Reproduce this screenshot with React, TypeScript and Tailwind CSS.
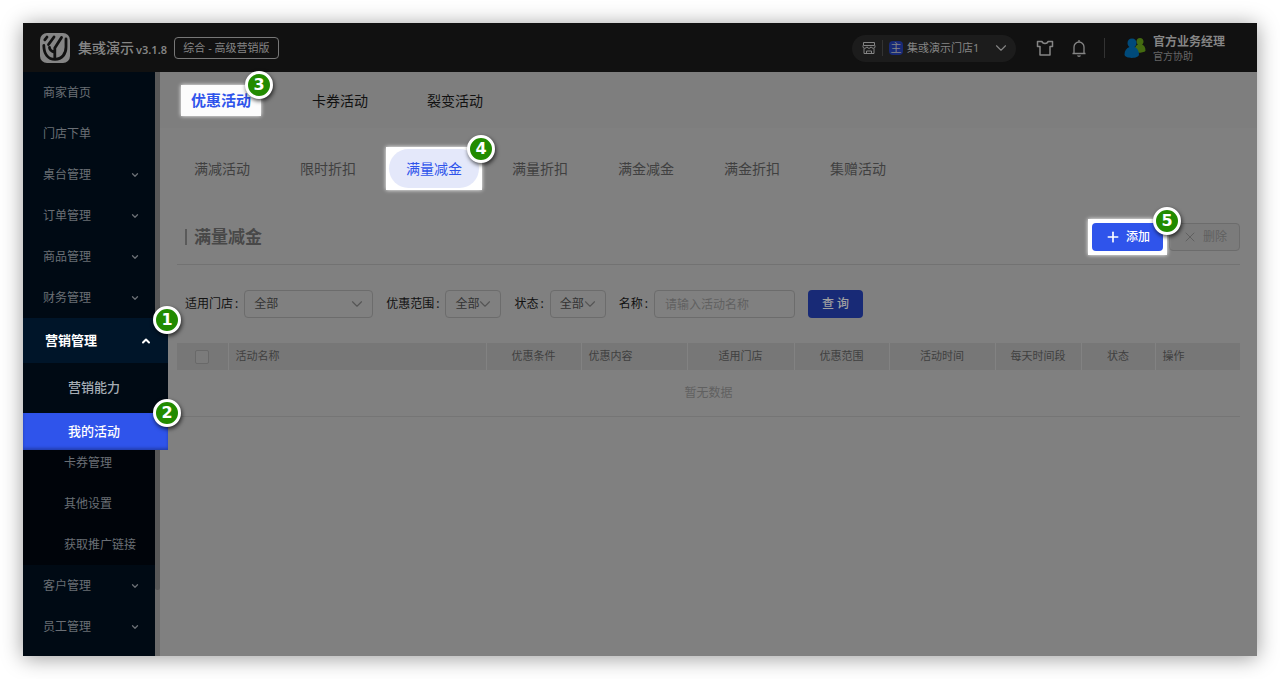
import type { ReactNode } from "react";
import clsx from "clsx";
import { ChevronDown, ChevronUp, Plus, X } from "lucide-react";

const menuTop = [
  { label: "商家首页", more: false },
  { label: "门店下单", more: false },
  { label: "桌台管理", more: true },
  { label: "订单管理", more: true },
  { label: "商品管理", more: true },
  { label: "财务管理", more: true },
];
const submenu = ["卡券管理", "其他设置", "获取推广链接"];
const menuBottom = [
  { label: "客户管理", more: true },
  { label: "员工管理", more: true },
];

const tabs = [
  "满减活动",
  "限时折扣",
  "满量减金",
  "满量折扣",
  "满金减金",
  "满金折扣",
  "集赠活动",
];

const columns = [
  { label: "活动名称", className: "w-[258px] pl-[7px] text-left" },
  { label: "优惠条件", className: "w-[95px] text-center" },
  { label: "优惠内容", className: "w-[106px] pl-[7px] text-left" },
  { label: "适用门店", className: "w-[107px] text-center" },
  { label: "优惠范围", className: "w-[95px] text-center" },
  { label: "活动时间", className: "w-[106px] text-center" },
  { label: "每天时间段", className: "w-[86px] text-center" },
  { label: "状态", className: "w-[74px] text-center" },
  { label: "操作", className: "w-[85px] pl-[7px] text-left" },
];

function Badge({ children, className }: { children: ReactNode; className: string }) {
  return (
    <span
      className={clsx(
        "absolute z-20 flex h-7 w-7 items-center justify-center rounded-full border-3 border-white bg-[#228b00] font-['DejaVu_Sans',sans-serif] text-base font-bold text-white shadow-[1px_2px_4px_rgba(0,0,0,0.7)]",
        className,
      )}
    >
      {children}
    </span>
  );
}

function Logo() {
  return (
    <svg className="h-[30px] w-[30px]" viewBox="0 0 30 30" fill="none" aria-hidden="true">
      <rect width="30" height="30" rx="7" fill="#858585" />
      <g stroke="#111" strokeWidth="2.8" strokeLinecap="round" strokeLinejoin="round">
        <path d="M4.800 6.800 7 4" />
        <path d="M8.500 11.500 14 4" />
        <path d="M3.800 12.500C4 21 8 26.300 15 26.300S26 21 26 14V6" />
        <path d="M21.500 4.500 14.800 15V25.500M9.500 14.500c0 2 1.500 3.500 5.300 5" />
      </g>
    </svg>
  );
}

function MenuItem({ label, more }: { label: string; more: boolean }) {
  return (
    <a href="#" className="flex h-[41px] items-center justify-between pr-[15px] pl-5">
      {label}
      {more && <ChevronDown size={10} strokeWidth={3} aria-hidden="true" />}
    </a>
  );
}

function Sidebar() {
  return (
    <aside className="flex w-[137px] shrink-0 bg-[#6c6c6c] text-xs text-[#6a6f75]">
      <nav className="w-[132px] shrink-0 bg-[#000a14]">
        {menuTop.map((item) => (
          <MenuItem key={item.label} {...item} />
        ))}
        <div className="relative z-10 -mr-[13px] -mb-2 text-[13px] text-[#a6adb4]">
          <a
            href="#"
            className="relative flex h-[45px] items-center justify-between bg-[#001529] pr-4 pl-[22px] font-bold text-white"
          >
            营销管理
            <ChevronUp size={12} strokeWidth={4} aria-hidden="true" />
            <Badge className="-top-3 -right-[13px]">1</Badge>
          </a>
          <a href="#" className="flex h-[50px] items-center bg-[#000a14] pl-[45px] font-medium">
            营销能力
          </a>
          <a
            href="#"
            className="relative flex h-[37px] items-center bg-[#2f54eb] pl-[45px] font-medium text-white shadow-[inset_0_-2px_3px_rgba(0,0,0,0.25)]"
          >
            我的活动
            <Badge className="-top-[14px] -right-[13px]">2</Badge>
          </a>
        </div>
        <div className="bg-[#00040a]">
          {submenu.map((label) => (
            <a key={label} href="#" className="flex h-[41px] items-center pl-[41px]">
              {label}
            </a>
          ))}
        </div>
        {menuBottom.map((item) => (
          <MenuItem key={item.label} {...item} />
        ))}
      </nav>
      <div className="h-[518px] w-[5px] rounded-b-sm bg-[#585858]" />
    </aside>
  );
}

function Header() {
  return (
    <header className="flex h-[49px] items-center bg-[#111] pt-px pr-8 pl-[17px] text-[#858585]">
      <Logo />
      <span className="ml-2 text-sm font-medium">集彧演示</span>
      <span className="mt-1 ml-[2px] text-[11px] font-semibold">v3.1.8</span>
      <span className="ml-[7px] flex h-[22px] w-[105px] items-center justify-center rounded border border-[#777] text-[11px]">
        综合 - 高级营销版
      </span>
      <button
        type="button"
        className="ml-auto flex h-[27px] w-[164px] items-center rounded-full bg-[#1c1c1c] pr-[6px] pl-[10px] text-[11px]"
      >
        <svg width="14" height="14" viewBox="0 0 14 14" fill="none" stroke="currentColor" aria-hidden="true">
          <path d="M1.500 1.500h11v3h-11zM1 4.500v1.300c0 2 3 2 4 0 .5 2 3.500 2 4 0 1 2 4 2 4 0V4.500M2 7.500v5h10v-5M4.500 12.500V10h5v2.500" />
        </svg>
        <span className="ml-[6px] h-4 w-px bg-[#333]" />
        <span className="mr-1 ml-[6px] flex h-[14px] w-[14px] items-center justify-center rounded-sm bg-[#182a76]">
          主
        </span>
        集彧演示门店1
        <ChevronDown size={18} strokeWidth={1.5} className="ml-auto" aria-hidden="true" />
      </button>
      <button type="button" aria-label="主题" className="ml-5">
        <svg width="18" height="18" viewBox="0 0 18 18" fill="none" stroke="currentColor" strokeWidth="1.5" strokeLinejoin="round" aria-hidden="true">
          <path d="M6 2.500c.5 2.500 5.500 2.500 6 0h4.500v5H14V16H4V7.500H1.500v-5z" />
        </svg>
      </button>
      <button type="button" aria-label="通知" className="ml-4">
        <svg width="18" height="18" viewBox="0 0 18 18" fill="none" stroke="currentColor" strokeWidth="1.300" strokeLinejoin="round" aria-hidden="true">
          <path d="M9 1v1.500M2.500 14.500h13M4 14.500V8a5 5 0 0 1 10 0v6.500M7.500 16.500c.5 1 2.500 1 3 0" />
        </svg>
      </button>
      <span className="ml-4 h-5 w-px bg-[#333]" />
      <svg className="ml-[19px]" width="22" height="22" viewBox="0 0 22 22" aria-hidden="true">
        <path
          d="M16 1c2.200 0 3.500 1.600 3.500 3.600 0 1.400-.6 2.400-1.400 3 2.300.9 3.400 3.200 3.400 5.900 0 2-7 3-11 1.500 0-4 1-6.500 3.400-7.400-.8-.6-1.400-1.600-1.400-3C12.500 2.600 13.800 1 16 1z"
          fill="#446a10"
        />
        <path
          d="M8 1.500c2.800 0 4.500 2 4.500 4.500 0 1.800-.8 3.200-2 4 2.800 1 4.500 3.500 4.500 7.500 0 4.500-14.500 4.500-14.500 0 0-4 2-6.500 5-7.500-1.200-.8-2-2.200-2-4 0-2.500 1.700-4.500 4.500-4.500z"
          fill="#004a7a"
        />
      </svg>
      <div className="mt-[2px] ml-[7px]">
        <div className="text-xs leading-[14px] font-semibold">官方业务经理</div>
        <div className="text-[10px] leading-[14px] text-[#666]">官方协助</div>
      </div>
    </header>
  );
}

function Label({ id, children }: { id: string; children: ReactNode }) {
  return (
    <label htmlFor={id} className="mr-[6px] flex gap-[2px] text-[#111]">
      {children}
      <span>:</span>
    </label>
  );
}

function SelectBox({ id, label, wide }: { id: string; label: string; wide?: boolean }) {
  return (
    <div className="mr-[13px] flex items-center">
      <Label id={id}>{label}</Label>
      <div
        className={clsx(
          "relative h-7 rounded border border-[#6c6c6c]",
          wide ? "w-[129px]" : "w-14",
        )}
      >
        <select
          id={id}
          className="h-full w-full appearance-none bg-transparent pl-[9px] text-[#333] outline-none"
        >
          <option>全部</option>
        </select>
        <ChevronDown
          size={18}
          strokeWidth={1.5}
          className="pointer-events-none absolute top-1 right-[6px] text-[#555]"
          aria-hidden="true"
        />
      </div>
    </div>
  );
}

export default function App() {
  return (
    <div className="flex min-h-screen bg-white p-[23px] font-['Noto_Sans','Noto_Sans_CJK_SC',sans-serif]">
      <div className="flex min-w-0 flex-1 flex-col bg-[#808080] shadow-[0_2px_20px_rgba(0,0,0,0.4)]">
        <Header />
        <div className="flex flex-1">
          <Sidebar />
          <main className="min-w-0 flex-1 text-xs">
            <nav className="flex h-14 items-center gap-[43px] bg-[#7e7e7e] pt-px pl-[21px] text-sm text-[#111]">
              <a
                href="#"
                className="relative flex h-[31px] w-20 items-center justify-center bg-[#fcfcfc] text-[15px] font-semibold text-[#2f54eb] shadow-[0_0_4px_#fff]"
              >
                优惠活动
                <Badge className="-top-[14px] -right-3">3</Badge>
              </a>
              <a href="#" className="w-20 pl-2">
                卡券活动
              </a>
              <a href="#">裂变活动</a>
            </nav>

            <nav className="mt-[19px] flex h-[43px] items-center pl-[18px] text-sm text-[#404040]">
              {tabs.map((tab) =>
                tab === "满量减金" ? (
                  <a
                    key={tab}
                    href="#"
                    className="relative mr-[14px] -ml-1 flex h-full w-24 items-center justify-center bg-white text-[#2f54eb] shadow-[0_0_4px_#fff]"
                  >
                    <span className="flex h-[39px] w-[90px] items-center justify-center rounded-full bg-[#e4e8fa]">
                      {tab}
                    </span>
                    <Badge className="-top-3 -right-[13px]">4</Badge>
                  </a>
                ) : (
                  <a key={tab} href="#" className="w-[106px] pl-4">
                    {tab}
                  </a>
                ),
              )}
            </nav>

            <section className="px-[17px] pt-5">
              <div className="flex h-[55px] items-center border-b border-[#727272] pl-2">
                <span className="h-4 w-[2px] bg-[#5a5a5a]" />
                <h1 className="ml-[7px] text-[17px] font-bold text-[#484848]">满量减金</h1>
                <div className="relative ml-auto bg-white p-1 shadow-[0_0_4px_#fff]">
                  <button
                    type="button"
                    className="flex h-7 w-[71px] items-center justify-center gap-[5px] rounded bg-[#2f54eb] font-medium text-white"
                  >
                    <Plus size={16} strokeWidth={2.5} aria-hidden="true" />
                    添加
                  </button>
                  <Badge className="-top-3 -right-[14px]">5</Badge>
                </div>
                <button
                  type="button"
                  disabled
                  className="ml-[2px] flex h-7 w-[71px] items-center justify-center gap-[5px] rounded border border-[#6c6c6c] bg-[#7b7b7b] text-[#606060]"
                >
                  <X size={16} strokeWidth={1.5} aria-hidden="true" />
                  删除
                </button>
              </div>

              <form className="mt-[25px] flex items-center pl-2">
                <SelectBox id="store" label="适用门店" wide />
                <SelectBox id="scope" label="优惠范围" />
                <SelectBox id="status" label="状态" />
                <Label id="name">名称</Label>
                <input
                  id="name"
                  type="text"
                  placeholder="请输入活动名称"
                  className="h-7 w-[141px] rounded border border-[#6c6c6c] bg-transparent px-[10px] outline-none placeholder:text-[#606060]"
                />
                <button
                  type="button"
                  className="ml-[13px] h-7 w-[55px] rounded bg-[#182a76] font-medium text-[#a0a0a0]"
                >
                  查 询
                </button>
              </form>

              <table className="mt-[25px] w-full table-fixed border-collapse">
                <thead>
                  <tr className="h-[27px] bg-[#777] text-[11px] text-[#404040]">
                    <th className="w-[51px]">
                      <input
                        type="checkbox"
                        aria-label="全选"
                        className="mx-auto block h-[14px] w-[14px] appearance-none rounded-xs border border-[#696969] bg-[#7b7b7b]"
                      />
                    </th>
                    {columns.map((col) => (
                      <th
                        key={col.label}
                        className={clsx("border-l border-[#828282] font-normal", col.className)}
                      >
                        {col.label}
                      </th>
                    ))}
                  </tr>
                </thead>
                <tbody>
                  <tr className="h-[46px] border-b border-[#757575]">
                    <td colSpan={10} className="text-center text-[#606060]">
                      暂无数据
                    </td>
                  </tr>
                </tbody>
              </table>
            </section>
          </main>
        </div>
      </div>
    </div>
  );
}
